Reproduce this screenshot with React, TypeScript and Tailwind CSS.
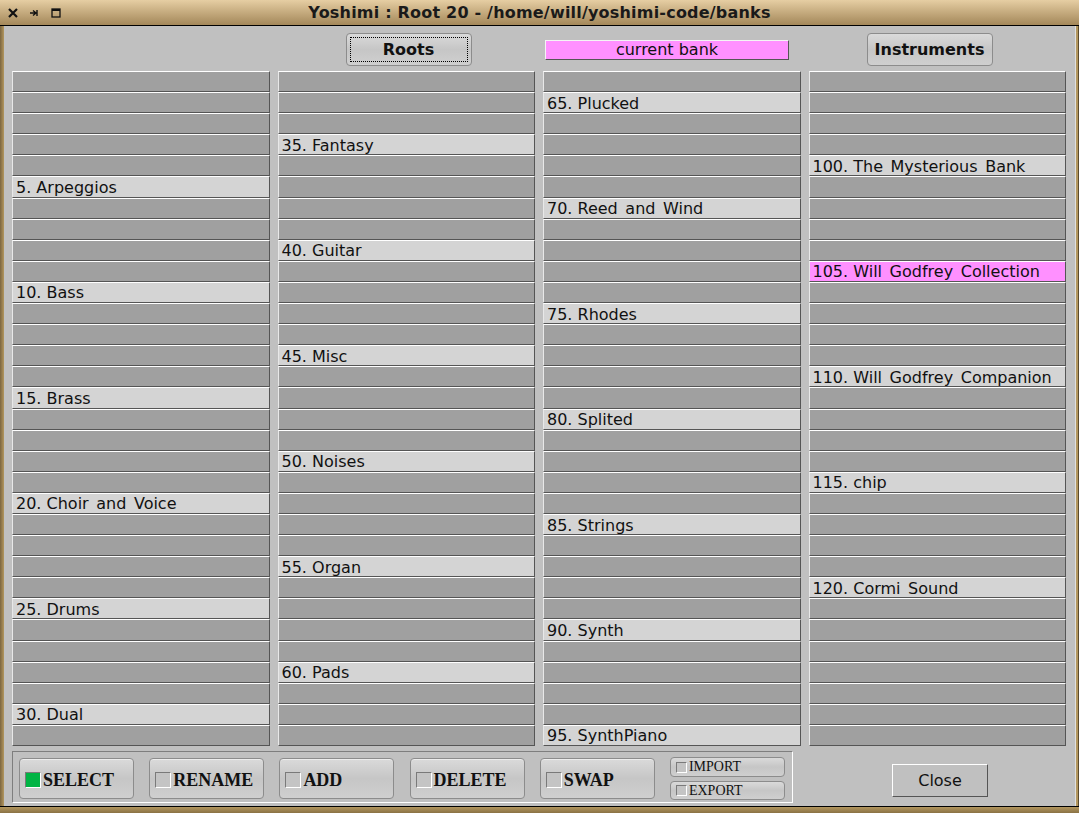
import React from "react";

const col1: Record<number, string> = {
  5: "5. Arpeggios",
  10: "10. Bass",
  15: "15. Brass",
  20: "20. Choir and Voice",
  25: "25. Drums",
  30: "30. Dual",
};
const col2: Record<number, string> = {
  3: "35. Fantasy",
  8: "40. Guitar",
  13: "45. Misc",
  18: "50. Noises",
  23: "55. Organ",
  28: "60. Pads",
};
const col3: Record<number, string> = {
  1: "65. Plucked",
  6: "70. Reed and Wind",
  11: "75. Rhodes",
  16: "80. Splited",
  21: "85. Strings",
  26: "90. Synth",
  31: "95. SynthPiano",
};
const col4: Record<number, string> = {
  4: "100. The Mysterious Bank",
  9: "105. Will Godfrey Collection",
  14: "110. Will Godfrey Companion",
  19: "115. chip",
  24: "120. Cormi Sound",
};

const columns = [col1, col2, col3, col4];
const rows = Array.from({ length: 32 }, (_, i) => i);

function Slot({ name, current }: { name?: string; current?: boolean }) {
  const bg = current ? "bg-[#ff90ff]" : name ? "bg-[#d4d4d4]" : "bg-[#a0a0a0]";
  // number prefix keeps a normal space, the bank name itself is spaced wider
  const cut = name ? name.indexOf(" ") : -1;
  const num = name && cut > 0 ? name.slice(0, cut + 1) : "";
  const rest = name && cut > 0 ? name.slice(cut + 1) : "";
  return (
    <div
      className={`${bg} flex items-center overflow-hidden whitespace-pre border-t border-l border-t-white border-l-[#e8e8e8] border-b border-r border-b-[#555] border-r-[#555] pl-[3px] pt-[2px] text-[16px] leading-none text-[#111]`}
    >
      {num}
      <span className="[word-spacing:2.5px]">{rest}</span>
    </div>
  );
}

function CheckBox({ on, small }: { on?: boolean; small?: boolean }) {
  return (
    <span
      className={`${small ? "w-[11px] h-[11px]" : "w-[16px] h-[16px]"} ${
        on ? "bg-[#00b444]" : "bg-[#c4c4c4]"
      } inline-block shrink-0 border-t border-l border-t-[#7a7a7a] border-l-[#7a7a7a] border-b border-r border-b-white border-r-white`}
    />
  );
}

function ModeButton({ label, on }: { label: string; on?: boolean }) {
  return (
    <div className="w-[115px] h-[41px] shrink-0 flex items-center pl-[5px] pt-[2px] rounded-[4px] border border-[#8c8c8c] bg-gradient-to-b from-[#dadada] via-[#c6c6c6] to-[#cfcfcf] shadow-[inset_0_1px_0_#ececec]">
      <CheckBox on={on} />
      <span className="ml-[2px] font-['Liberation_Serif'] font-bold text-[18px] leading-none text-[#111]">
        {label}
      </span>
    </div>
  );
}

function SmallButton({ label, h }: { label: string; h: string }) {
  return (
    <div
      className={`${h} w-[115px] flex items-center pl-[5px] rounded-[4px] border border-[#8c8c8c] bg-gradient-to-b from-[#dadada] via-[#c6c6c6] to-[#cfcfcf]`}
    >
      <CheckBox small />
      <span className="ml-[2px] font-['Liberation_Serif'] text-[14px] leading-none text-[#111]">
        {label}
      </span>
    </div>
  );
}

export default function App() {
  return (
    <div className="w-[1079px] h-[813px] flex flex-col bg-[#b3975f] font-['DejaVu_Sans',sans-serif] overflow-hidden">
      {/* title bar */}
      <div className="h-[26px] shrink-0 relative flex items-center border-b border-b-black bg-gradient-to-b from-[#e6cea3] to-[#a4885a]">
        <div className="absolute left-[8px] top-[8px] flex items-center gap-[12px]">
          <svg width="10" height="10" viewBox="0 0 10 10">
            <path d="M1 1 L9 9 M9 1 L1 9" stroke="#111" strokeWidth="2.2" />
          </svg>
          <svg width="9" height="10" viewBox="0 0 9 10">
            <path d="M0 5 H6 M3 2.5 L6 5 L3 7.5 M7 2 V8" stroke="#111" strokeWidth="1.4" fill="none" />
          </svg>
          <svg width="10" height="10" viewBox="0 0 10 10">
            <rect x="1" y="1" width="8" height="8" fill="none" stroke="#111" strokeWidth="1.3" />
            <rect x="1" y="1" width="8" height="2" fill="#111" />
          </svg>
        </div>
        <div className="flex-1 text-center font-bold text-[16px] leading-none text-[#1a1a1a] tracking-[0.2px]">
          Yoshimi : Root 20 - /home/will/yoshimi-code/banks
        </div>
      </div>

      <div className="flex-1 flex">
        <div className="w-[4px] bg-gradient-to-r from-[#7c6640] to-[#b3975f]" />
        <div className="flex-1 bg-[#c0c0c0] pl-[8px] pr-[9px] pt-[7px]">
          {/* header row */}
          <div className="grid grid-cols-4 gap-x-[8px] h-[33px]">
            <div />
            <div className="flex items-stretch">
              <div className="ml-[68px] w-[126px] rounded-[4px] border border-[#8c8c8c] bg-gradient-to-b from-[#dadada] via-[#c6c6c6] to-[#cfcfcf] p-[3px]">
                <div className="h-full border border-dotted border-black flex items-center justify-center font-bold text-[16px] leading-none text-[#111]">
                  Roots
                </div>
              </div>
            </div>
            <div className="flex items-center">
              <div className="ml-[2px] w-[244px] h-[20px] pt-[1px] bg-[#ff90ff] border-t border-l border-t-[#f4f4f4] border-l-[#f4f4f4] border-b border-r border-b-[#555] border-r-[#555] flex items-center justify-center text-[16px] leading-none text-[#111]">
                current bank
              </div>
            </div>
            <div className="flex items-stretch">
              <div className="ml-[58px] w-[126px] rounded-[4px] border border-[#8c8c8c] bg-gradient-to-b from-[#dadada] via-[#c6c6c6] to-[#cfcfcf] flex items-center justify-center font-bold text-[16px] leading-none text-[#111]">
                Instruments
              </div>
            </div>
          </div>

          {/* bank grid */}
          <div className="mt-[5px] grid grid-cols-4 gap-x-[8px] h-[675px]">
            {columns.map((col, c) => (
              <div key={c} className="grid grid-rows-[repeat(32,minmax(0,1fr))]">
                {rows.map((r) => (
                  <Slot key={r} name={col[r]} current={c === 3 && r === 9} />
                ))}
              </div>
            ))}
          </div>

          {/* bottom controls */}
          <div className="mt-[5px] flex items-start">
            <div className="w-[781px] h-[52px] border-t border-l border-t-[#7e7e7e] border-l-[#7e7e7e] border-b border-r border-b-white border-r-white pl-[6px] pt-[6px] flex gap-[15.2px]">
              <ModeButton label="SELECT" on />
              <ModeButton label="RENAME" />
              <ModeButton label="ADD" />
              <ModeButton label="DELETE" />
              <ModeButton label="SWAP" />
              <div className="flex flex-col gap-[4px] -mt-[1px]">
                <SmallButton label="IMPORT" h="h-[20px]" />
                <SmallButton label="EXPORT" h="h-[19px]" />
              </div>
            </div>
            <div className="ml-[99px] mt-[13px] w-[96px] h-[33px] border-t border-l border-t-white border-l-white border-b border-r border-b-[#555] border-r-[#555] flex items-center justify-center text-[16px] leading-none text-[#111]">
              Close
            </div>
          </div>
        </div>
        <div className="w-[4px] border-l border-l-[#e0e0e0] bg-[#b3975f] border-r border-r-[#5a4a2c]" />
      </div>
      <div className="h-[7px] shrink-0 border-t border-t-black bg-gradient-to-b from-[#b3975f] to-[#8a7244]" />
    </div>
  );
}
